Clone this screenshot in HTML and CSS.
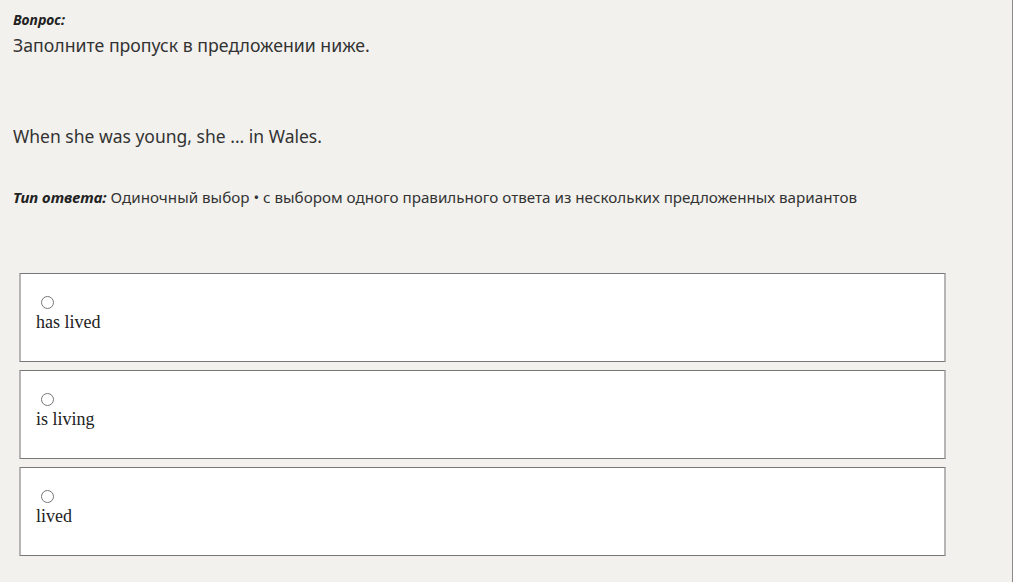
FILE: index.html
```html
<!DOCTYPE html>
<html lang="ru">
<head>
    <meta charset="UTF-8">
    <title>Вопрос</title>
    <link rel="stylesheet" href="styles.css">
</head>
<body>
    <div class="page">
        <div class="question">
            <div class="label">Вопрос:</div>
            <div class="task">Заполните пропуск в предложении ниже.</div>
            <div class="sentence">When she was young, she ... in Wales.</div>
            <div class="type"><span class="label">Тип ответа:</span> Одиночный выбор • с выбором одного правильного ответа из нескольких предложенных вариантов</div>
        </div>

        <!-- варианты ответа -->
        <div class="answers">
            <div class="answer">
                <span class="radio"></span>
                <div class="answer-text">has lived</div>
            </div>
            <div class="answer">
                <span class="radio"></span>
                <div class="answer-text">is living</div>
            </div>
            <div class="answer">
                <span class="radio"></span>
                <div class="answer-text">lived</div>
            </div>
        </div>
    </div>
</body>
</html>
```

FILE: styles.css
```css
/* основная страница */
body {
    margin: 0;
    background-color: #f2f1ee;
    color: #333;
    font-family: "Noto Sans", "Open Sans", sans-serif;
}

.page {
    height: 582px;
    box-sizing: border-box;
    border-right: 1px solid #8a8a8a;
    padding: 10px 0 0 13px;
}

.label {
    font-size: 14px;
    line-height: 19px;
    font-weight: bold;
    font-style: italic;
    color: #222;
}

.task {
    font-size: 17.7px;
    line-height: 24px;
    margin-top: 4px;
}

.sentence {
    font-size: 17.5px;
    line-height: 24px;
    margin-top: 67px;
}

.type {
    font-size: 15.2px;
    line-height: 20px;
    margin-top: 39px;
}

.type .label {
    font-size: 15px;
    line-height: 20px;
}

.answers {
    display: flex;
    flex-direction: column;
    gap: 8px;
    margin: 66px 0 0 6px;
    width: 927px;
}

.answer {
    height: 89px;
    box-sizing: border-box;
    background: #fff;
    border-top: 1px solid #777;
    border-bottom: 1px solid #777;
    border-left: 2px solid #b5b5b5;
    border-right: 2px solid #b5b5b5;
    padding: 22px 0 0 15px;
}

.radio {
    display: block;
    width: 11px;
    height: 11px;
    margin-left: 5px;
    border: 1px solid #767676;
    border-radius: 50%;
}

.answer-text {
    font-family: "Liberation Serif", "Times New Roman", serif;
    font-size: 18px;
    line-height: 22px;
    margin-top: 2px;
    color: #222;
}
```
